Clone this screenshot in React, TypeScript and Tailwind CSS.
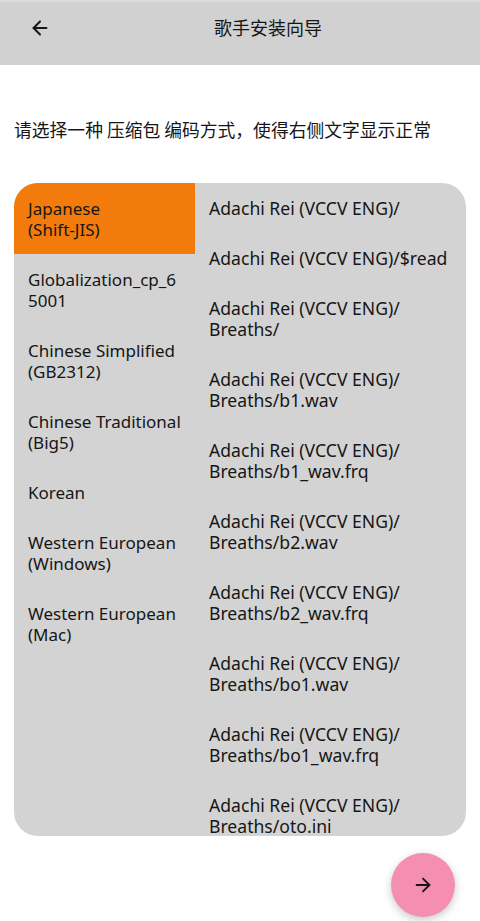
import React, { useState } from 'react';
import { ArrowLeft, ArrowRight } from 'lucide-react';

const encodings: string[][] = [
  ['Japanese', '(Shift-JIS)'],
  ['Globalization_cp_6', '5001'],
  ['Chinese Simplified', '(GB2312)'],
  ['Chinese Traditional', '(Big5)'],
  ['Korean'],
  ['Western European', '(Windows)'],
  ['Western European', '(Mac)'],
];

const files: string[][] = [
  ['Adachi Rei (VCCV ENG)/'],
  ['Adachi Rei (VCCV ENG)/$read'],
  ['Adachi Rei (VCCV ENG)/', 'Breaths/'],
  ['Adachi Rei (VCCV ENG)/', 'Breaths/b1.wav'],
  ['Adachi Rei (VCCV ENG)/', 'Breaths/b1_wav.frq'],
  ['Adachi Rei (VCCV ENG)/', 'Breaths/b2.wav'],
  ['Adachi Rei (VCCV ENG)/', 'Breaths/b2_wav.frq'],
  ['Adachi Rei (VCCV ENG)/', 'Breaths/bo1.wav'],
  ['Adachi Rei (VCCV ENG)/', 'Breaths/bo1_wav.frq'],
  ['Adachi Rei (VCCV ENG)/', 'Breaths/oto.ini'],
];

export default function App() {
  const [selected, setSelected] = useState(0);

  return (
    <div className="w-[480px] h-[921px] bg-white flex flex-col text-[#161616] font-['Noto_Sans','Noto_Sans_CJK_SC',sans-serif] overflow-hidden">
      {/* top bar */}
      <div className="h-[65px] shrink-0 bg-[#d1d1d1] border-t-2 border-[#dcdcdc]">
        <div className="h-[51px] flex items-center">
          <button className="w-[56px] h-full flex items-center justify-end pr-[5px]">
            <ArrowLeft className="w-[22px] h-[22px]" strokeWidth={2.2} />
          </button>
          <div className="flex-1 text-center text-[18px] font-['Noto_Sans_CJK_SC',sans-serif]">
            歌手安装向导
          </div>
        </div>
      </div>

      <p className="mt-[52px] px-[14px] text-[17.8px] leading-[24px] font-['Noto_Sans_CJK_SC',sans-serif]">
        请选择一种 压缩包 编码方式，使得右侧文字显示正常
      </p>

      <div className="mt-[42px] mx-[14px] h-[653px] shrink-0 rounded-[24px] bg-[#d3d3d3] overflow-hidden flex">
        <div className="w-[181px] shrink-0 flex flex-col">
          {encodings.map((lines, i) => (
            <div
              key={i}
              onClick={() => setSelected(i)}
              className={`px-[14px] pt-[15px] pb-[14px] text-[17px] leading-[21px] whitespace-nowrap ${
                selected === i ? 'bg-[#f27b0c]' : ''
              }`}
            >
              {lines.map((l, j) => (
                <div key={j}>{l}</div>
              ))}
            </div>
          ))}
        </div>
        <div className="flex-1 flex flex-col">
          {files.map((lines, i) => (
            <div key={i} className="px-[14px] pt-[15px] pb-[14px] text-[17.6px] leading-[21px] whitespace-nowrap">
              {lines.map((l, j) => (
                <div key={j}>{l}</div>
              ))}
            </div>
          ))}
        </div>
      </div>

      <div className="flex justify-end pr-[25px] mt-[17px]">
        <button className="w-[64px] h-[64px] rounded-full bg-[#f48fb1] shadow-[0_3px_8px_rgba(0,0,0,0.22)] flex items-center justify-center">
          <ArrowRight className="w-[22px] h-[22px]" strokeWidth={2} />
        </button>
      </div>
    </div>
  );
}
